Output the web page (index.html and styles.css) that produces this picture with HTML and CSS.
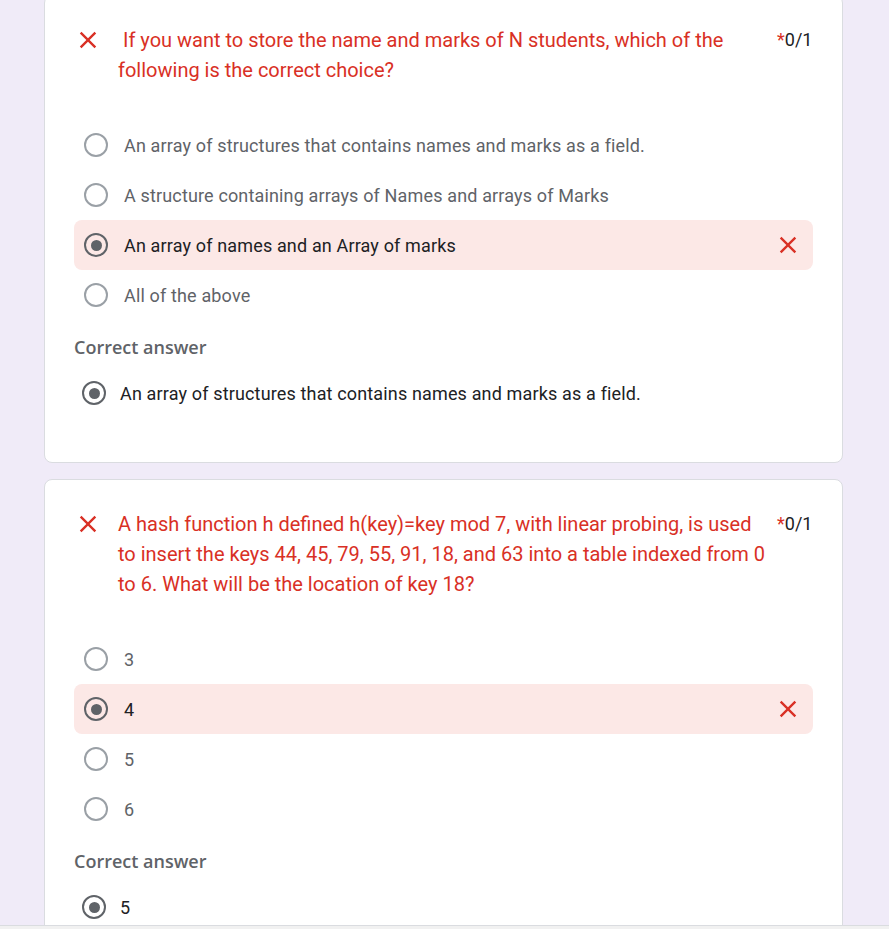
FILE: index.html
```html
<!DOCTYPE html>
<html lang="en">
<head>
<meta charset="utf-8">
<title>Quiz results</title>
<link rel="stylesheet" href="styles.css">
</head>
<body>
<main class="page">
  <section class="card first">
    <div class="q-head">
      <span class="q-icon"><svg viewBox="0 0 24 24" width="28" height="28"><path d="M19 6.41 17.59 5 12 10.59 6.41 5 5 6.41 10.59 12 5 17.59 6.41 19 12 13.41 17.59 19 19 17.59 13.41 12z" fill="#d93025"/></svg></span>
      <div class="q-text">&nbsp;If you want to store the name and marks of N students, which of the following is the correct choice?</div>
      <div class="q-score"><span class="req">*</span>0/1</div>
    </div>
    <div class="options">
      <div class="opt"><span class="radio"></span><span class="opt-text">An array of structures that contains names and marks as a field.</span></div>
      <div class="opt"><span class="radio"></span><span class="opt-text">A structure containing arrays of Names and arrays of Marks</span></div>
      <div class="opt wrong"><span class="radio checked"></span><span class="opt-text">An array of names and an Array of marks</span><span class="opt-mark"><svg viewBox="0 0 24 24" width="28" height="28"><path d="M19 6.41 17.59 5 12 10.59 6.41 5 5 6.41 10.59 12 5 17.59 6.41 19 12 13.41 17.59 19 19 17.59 13.41 12z" fill="#d93025"/></svg></span></div>
      <div class="opt"><span class="radio"></span><span class="opt-text">All of the above</span></div>
    </div>
    <div class="correct-label">Correct answer</div>
    <div class="correct-opt"><span class="radio checked"></span><span class="opt-text">An array of structures that contains names and marks as a field.</span></div>
  </section>

  <section class="card">
    <div class="q-head">
      <span class="q-icon"><svg viewBox="0 0 24 24" width="28" height="28"><path d="M19 6.41 17.59 5 12 10.59 6.41 5 5 6.41 10.59 12 5 17.59 6.41 19 12 13.41 17.59 19 19 17.59 13.41 12z" fill="#d93025"/></svg></span>
      <div class="q-text">A hash function h defined h(key)=key mod 7, with linear probing, is used to insert the keys 44, 45, 79, 55, 91, 18, and 63 into a table indexed from 0 to 6. What will be the location of key 18?</div>
      <div class="q-score"><span class="req">*</span>0/1</div>
    </div>
    <div class="options">
      <div class="opt"><span class="radio"></span><span class="opt-text">3</span></div>
      <div class="opt wrong"><span class="radio checked"></span><span class="opt-text">4</span><span class="opt-mark"><svg viewBox="0 0 24 24" width="28" height="28"><path d="M19 6.41 17.59 5 12 10.59 6.41 5 5 6.41 10.59 12 5 17.59 6.41 19 12 13.41 17.59 19 19 17.59 13.41 12z" fill="#d93025"/></svg></span></div>
      <div class="opt"><span class="radio"></span><span class="opt-text">5</span></div>
      <div class="opt"><span class="radio"></span><span class="opt-text">6</span></div>
    </div>
    <div class="correct-label">Correct answer</div>
    <div class="correct-opt"><span class="radio checked"></span><span class="opt-text">5</span></div>
  </section>
</main>
<div class="bottom-bar"></div>
</body>
</html>
```

FILE: styles.css
```css
html, body {
  margin: 0;
  padding: 0;
  background: #f0ebf8;
  font-family: Roboto, "Liberation Sans", sans-serif;
  color: #202124;
}

.page {
  margin: -5px 0 0 44px;
  width: 799px;
  display: flex;
  flex-direction: column;
  gap: 16px;
  padding-bottom: 40px;
}

.card {
  background: #fff;
  border: 1px solid #dadce0;
  border-radius: 8px;
  padding: 29px 29px 46px 29px;
}

.q-head {
  display: flex;
  align-items: flex-start;
}

.q-icon {
  width: 28px;
  height: 30px;
  flex: none;
  display: flex;
  align-items: center;
  justify-content: center;
}

.q-text {
  flex: 1;
  margin-left: 16px;
  font-size: 20px;
  line-height: 30px;
  color: #d93025;
  padding-right: 6px;
}

.q-score {
  flex: none;
  font-size: 18px;
  line-height: 30px;
  color: #202124;
  width: 36px;
}

.req { color: #d93025; }

.options {
  margin-top: 35px;
  display: flex;
  flex-direction: column;
}

.opt {
  height: 50px;
  display: flex;
  align-items: center;
  padding-left: 10px;
  padding-right: 11px;
  border-radius: 8px;
}

.opt.wrong {
  background: #fce8e6;
}

.radio {
  width: 20px;
  height: 20px;
  border: 2px solid #9aa0a6;
  border-radius: 50%;
  flex: none;
  display: flex;
  align-items: center;
  justify-content: center;
}

.radio.checked {
  border-color: #5f6368;
}

.radio.checked::after {
  content: "";
  width: 11px;
  height: 11px;
  border-radius: 50%;
  background: #5f6368;
}

.opt-text {
  margin-left: 16px;
  font-size: 18px;
  letter-spacing: 0.15px;
  color: #5f6368;
  flex: 1;
}

.opt.wrong .opt-text { color: #202124; }

.opt-mark {
  width: 28px;
  height: 28px;
  flex: none;
  display: flex;
}

.correct-label {
  margin-top: 15px;
  font-family: "Open Sans", Roboto, sans-serif;
  font-weight: 600;
  font-size: 18px;
  line-height: 24px;
  color: #5f6368;
}

.correct-opt {
  height: 46px;
  display: flex;
  align-items: center;
  padding-left: 8px;
  margin-top: 11px;
}

.correct-opt .opt-text {
  margin-left: 14px;
  color: #202124;
}

.bottom-bar {
  position: fixed;
  left: 0;
  right: 0;
  bottom: 0;
  height: 3px;
  background: #f1f1f1;
  border-top: 1px solid #dadce0;
}
```
